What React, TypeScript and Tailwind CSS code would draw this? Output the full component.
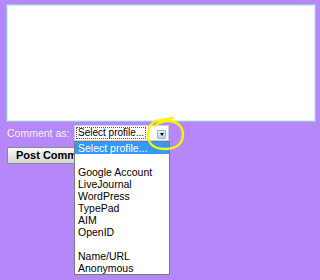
import React from 'react'

const profiles = ['', 'Google Account', 'LiveJournal', 'WordPress', 'TypePad', 'AIM', 'OpenID', '', 'Name/URL', 'Anonymous']

export default function App() {
  return (
    <div className="relative w-[320px] h-[280px] overflow-hidden bg-[#b687f9] font-['Liberation_Sans',Arial,sans-serif]">
      <div className="flex flex-col items-start pt-[4px] pl-[6px]">
        {/* comment box */}
        <div className="w-[310px] h-[118px] bg-white border border-[#9cc3dc] shadow-[inset_0_0_0_1px_#dcebf4]" />

        <div className="flex items-center mt-[3px] h-[16px]">
          <span className="pl-[1px] w-[68px] text-[10.5px] text-[#f5f0ff] leading-none whitespace-nowrap">Comment as:</span>
          <div className="flex items-end pb-[1px] pl-[1px] pr-[1px] w-[95px] h-[16px] bg-white border border-[#c9d1dc]">
            <div className="w-[70px] h-[12px] border border-dotted border-[#555] flex items-center pl-[1px] text-[10px] text-black leading-none whitespace-nowrap">
              Select profile...
            </div>
            <div className="ml-auto mr-[1px] w-[9px] h-[9px] rounded-[1px] border border-[#9bb4d6] bg-gradient-to-b from-[#e4effc] to-[#b9d3f3] flex items-center justify-center">
              <div className="w-0 h-0 border-l-[2.5px] border-r-[2.5px] border-t-[3px] border-l-transparent border-r-transparent border-t-black" />
            </div>
          </div>
        </div>

        <button className="mt-[6px] ml-[1px] h-[17px] px-[8px] rounded-[2px] border border-[#8a8a8a] bg-gradient-to-b from-[#fafafa] to-[#d6d6d6] text-[11px] font-bold text-black leading-none whitespace-nowrap">
          Post Comment
        </button>
      </div>

      {/* open dropdown list */}
      <div className="absolute left-[74px] top-[141px] w-[96px] h-[134px] flex flex-col bg-white border border-[#7a7a7a] text-[10.5px] text-black">
        <div className="h-[12px] leading-[12px] pl-[3px] bg-[#3399ff] text-white whitespace-nowrap">Select profile...</div>
        {profiles.map((p, i) => (
          <div key={i} className="h-[12px] leading-[12px] pl-[3px] whitespace-nowrap">
            {p}
          </div>
        ))}
      </div>

      {/* yellow marker scribble */}
      <svg className="absolute left-0 top-0 pointer-events-none" width="320" height="280" viewBox="0 0 320 280">
        <path
          d="M173 118 L156 121 C148 124 145 136 151 144 C157 151 176 151 181 142 C186 132 181 121 168 121 C162 121 158 123 155 126"
          fill="none"
          stroke="#f6f600"
          strokeWidth="2.4"
          strokeLinecap="round"
          strokeLinejoin="round"
        />
      </svg>
    </div>
  )
}
